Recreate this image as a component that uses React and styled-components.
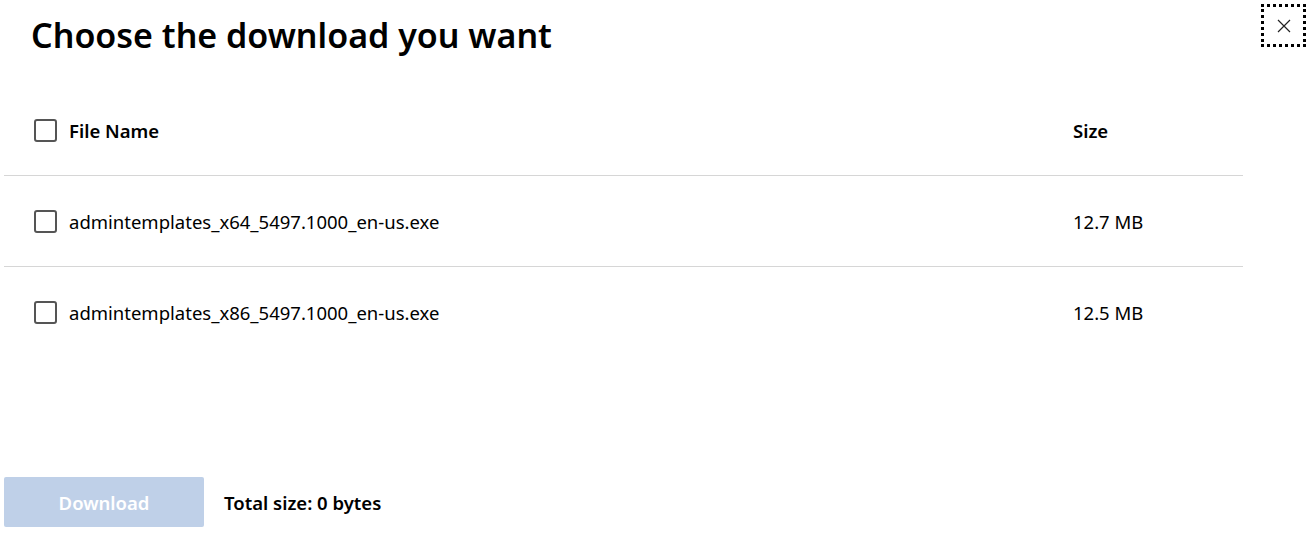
import styled, { createGlobalStyle } from "styled-components";

const files = [
  { name: "admintemplates_x64_5497.1000_en-us.exe", size: "12.7 MB" },
  { name: "admintemplates_x86_5497.1000_en-us.exe", size: "12.5 MB" },
];

export default function App() {
  return (
    <>
      <GlobalStyle />
      <Dialog>
        <Header>
          <Title>Choose the download you want</Title>
          <CloseButton aria-label="Close">
            <svg width="14" height="14" viewBox="0 0 14 14">
              <path d="M1 1 L13 13 M13 1 L1 13" stroke="#222" strokeWidth="1.2" fill="none" />
            </svg>
          </CloseButton>
        </Header>
        <Table>
          <Row $head>
            <NameCell>
              <Box />
              <span>File Name</span>
            </NameCell>
            <SizeCell>Size</SizeCell>
          </Row>
          {files.map((f, i) => (
            <Row key={f.name} $last={i === files.length - 1}>
              <NameCell>
                <Box />
                <span>{f.name}</span>
              </NameCell>
              <SizeCell>{f.size}</SizeCell>
            </Row>
          ))}
        </Table>
        <Footer>
          <DownloadButton disabled>Download</DownloadButton>
          <Total>Total size: 0 bytes</Total>
        </Footer>
      </Dialog>
    </>
  );
}

const GlobalStyle = createGlobalStyle`
  body {
    margin: 0;
    background: #fff;
    font-family: "Segoe UI", "Noto Sans", sans-serif;
    color: #000;
  }
`;

const Dialog = styled.div`
  width: 1311px;
  height: 534px;
  display: flex;
  flex-direction: column;
  padding: 0 5px 0 4px;
  box-sizing: border-box;
`;

const Header = styled.div`
  display: flex;
  justify-content: space-between;
  align-items: flex-start;
  height: 85px;
  padding-top: 4px;
  box-sizing: border-box;
`;

const Title = styled.h1`
  margin: 7px 0 0 27px;
  font-size: 34px;
  line-height: 48px;
  font-weight: 600;
`;

const CloseButton = styled.button`
  width: 45px;
  height: 43px;
  display: flex;
  align-items: center;
  justify-content: center;
  background: none;
  border: 3px dotted #000;
  padding: 0;
  box-sizing: border-box;
`;

const Table = styled.div`
  width: 1239px;
  display: flex;
  flex-direction: column;
`;

const Row = styled.div`
  display: flex;
  align-items: center;
  height: 90px;
  border-bottom: ${(p) => (p.$last ? "none" : "1px solid #d6d6d6")};
  font-size: 18.5px;
  font-weight: ${(p) => (p.$head ? 600 : 400)};
`;

const NameCell = styled.div`
  flex: 1;
  display: flex;
  align-items: center;
  gap: 12px;
  padding-left: 30px;
`;

const SizeCell = styled.div`
  width: 170px;
`;

const Box = styled.span`
  width: 23px;
  height: 23px;
  border: 2px solid #555;
  border-radius: 3px;
  box-sizing: border-box;
  flex-shrink: 0;
`;

const Footer = styled.div`
  display: flex;
  align-items: center;
  gap: 20px;
  margin-top: 120px;
`;

const DownloadButton = styled.button`
  width: 200px;
  height: 50px;
  background: #bfd0e8;
  color: #fff;
  border: none;
  border-radius: 2px;
  font-family: inherit;
  font-size: 18.5px;
  font-weight: 600;
`;

const Total = styled.span`
  font-size: 18.5px;
  font-weight: 600;
`;
